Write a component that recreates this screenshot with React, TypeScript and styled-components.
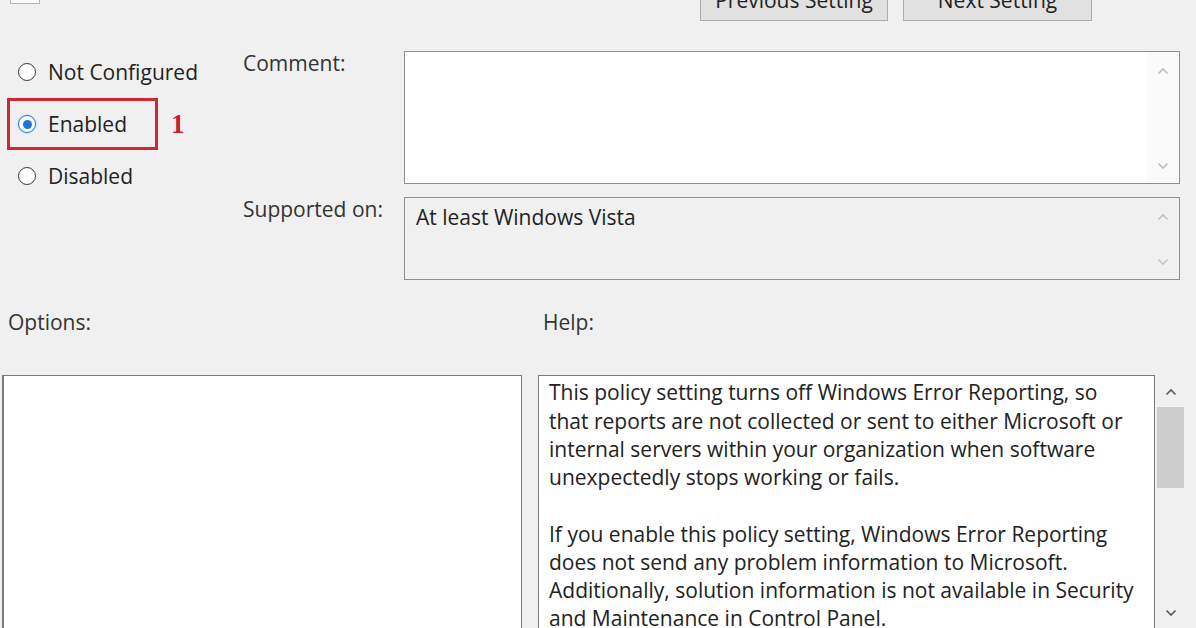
import React from "react";
import styled, { createGlobalStyle } from "styled-components";

const GlobalStyle = createGlobalStyle`
  html, body {
    margin: 0;
    padding: 0;
    background: #f0f0f0;
  }
`;

const Page = styled.div`
  width: 1196px;
  height: 628px;
  overflow: hidden;
  background: #f0f0f0;
  font-family: "Open Sans", "Noto Sans", sans-serif;
  font-size: 21px;
  line-height: 28.25px;
  color: #222;
`;

const TopBar = styled.div`
  display: flex;
  align-items: flex-start;
  height: 41px;
  margin-top: -20px;
  padding: 0 104px 0 10px;
  gap: 15px;
`;

const StateIcon = styled.div`
  width: 28px;
  height: 23px;
  border: 1px solid #b4b4b4;
  border-top: none;
  background: #fafafa;
  margin-right: auto;
`;

const NavButton = styled.button<{ $width: number }>`
  width: ${({ $width }) => $width}px;
  height: 41px;
  background: #e1e1e1;
  border: 1px solid #adadad;
  font: inherit;
  color: #222;
  padding: 0;
`;

const Upper = styled.div`
  display: grid;
  grid-template-columns: 243px 161px 776px;
  grid-template-rows: 133px 83px;
  row-gap: 13px;
  margin-top: 30px;
`;

const RadioGroup = styled.div`
  grid-column: 1;
  grid-row: 1 / 3;
  display: flex;
  flex-direction: column;
  gap: 6px;
  padding-left: 18px;
  margin-top: -2px;
`;

const RadioRow = styled.label<{ $highlight?: boolean }>`
  display: flex;
  align-items: center;
  gap: 12px;
  height: 46px;
  box-sizing: border-box;
  ${({ $highlight }) =>
    $highlight &&
    `
    outline: 3px solid #cf2733;
    margin-left: -8px;
    padding-left: 8px;
    width: 145px;
  `}
`;

const RadioCircle = styled.span<{ $checked?: boolean }>`
  width: 18px;
  height: 18px;
  flex: none;
  box-sizing: border-box;
  border-radius: 50%;
  background: #fff;
  border: 1.5px solid ${({ $checked }) => ($checked ? "#1d75d3" : "#3a3a3a")};
  box-shadow: ${({ $checked }) => ($checked ? "0 0 0 1px #cfe3f7" : "none")};
  display: flex;
  align-items: center;
  justify-content: center;

  &::after {
    content: "";
    width: 9px;
    height: 9px;
    border-radius: 50%;
    background: #1d75d3;
    display: ${({ $checked }) => ($checked ? "block" : "none")};
  }
`;

const Marked = styled.div`
  display: flex;
  align-items: center;
  gap: 16px;
`;

const StepNumber = styled.span`
  font-family: "Liberation Serif", serif;
  font-weight: bold;
  font-size: 27px;
  color: #c8202c;
`;

const FieldLabel = styled.div<{ $row: number }>`
  grid-column: 2;
  grid-row: ${({ $row }) => $row};
  margin-top: -2px;
  color: #333;
`;

const FieldBox = styled.div<{ $row: number; $readOnly?: boolean }>`
  grid-column: 3;
  grid-row: ${({ $row }) => $row};
  display: flex;
  box-sizing: border-box;
  border: 1px solid #8f8f8f;
  background: ${({ $readOnly }) => ($readOnly ? "#f0f0f0" : "#fff")};
`;

const FieldText = styled.div`
  flex: 1;
  padding: 5px 11px;
`;

const ThinScroll = styled.div<{ $tone: string; $track: string }>`
  width: 32px;
  display: flex;
  flex-direction: column;
  justify-content: space-between;
  align-items: center;
  padding: 15px 0 13px;
  color: ${({ $tone }) => $tone};
  background: ${({ $track }) => $track};
`;

const LabelsRow = styled.div`
  display: grid;
  grid-template-columns: 535px 1fr;
  margin-top: 28px;
  padding-left: 8px;
  color: #333;
`;

const Bottom = styled.div`
  display: flex;
  margin-top: 39px;
  padding-left: 2px;
  height: 270px;
`;

const OptionsBox = styled.div`
  width: 520px;
  box-sizing: border-box;
  border: 1px solid #7a7a7a;
  border-left-width: 2px;
  background: #fff;
  margin-right: 16px;
`;

const HelpBox = styled.div`
  width: 617px;
  box-sizing: border-box;
  border: 1px solid #7a7a7a;
  background: #fff;
  padding: 2px 0 0 10px;
`;

const HelpPara = styled.div`
  margin-bottom: 28.25px;
`;

const HelpLine = styled.div`
  white-space: nowrap;
`;

const ScrollBar = styled.div`
  width: 31px;
  display: flex;
  flex-direction: column;
  align-items: center;
  padding-top: 13px;
  background: #f0f0f0;
  color: #5a5a5a;
`;

const Thumb = styled.div`
  width: 27px;
  height: 81px;
  background: #cdcdcd;
  margin: 11px 0 121px;
`;

function Chevron({ up }: { up?: boolean }) {
  return (
    <svg width="12" height="8" viewBox="0 0 12 8">
      <path
        d={up ? "M1.5 6.5 L6 2 L10.5 6.5" : "M1.5 1.5 L6 6 L10.5 1.5"}
        fill="none"
        stroke="currentColor"
        strokeWidth="1.6"
      />
    </svg>
  );
}

const helpText = [
  [
    "This policy setting turns off Windows Error Reporting, so",
    "that reports are not collected or sent to either Microsoft or",
    "internal servers within your organization when software",
    "unexpectedly stops working or fails.",
  ],
  [
    "If you enable this policy setting, Windows Error Reporting",
    "does not send any problem information to Microsoft.",
    "Additionally, solution information is not available in Security",
    "and Maintenance in Control Panel.",
  ],
];

export default function App() {
  return (
    <Page>
      <GlobalStyle />
      <TopBar>
        <StateIcon />
        <NavButton $width={188}>Previous Setting</NavButton>
        <NavButton $width={189}>Next Setting</NavButton>
      </TopBar>

      <Upper>
        <RadioGroup>
          <RadioRow>
            <RadioCircle />
            Not Configured
          </RadioRow>
          <Marked>
            <RadioRow $highlight>
              <RadioCircle $checked />
              Enabled
            </RadioRow>
            <StepNumber>1</StepNumber>
          </Marked>
          <RadioRow>
            <RadioCircle />
            Disabled
          </RadioRow>
        </RadioGroup>

        <FieldLabel $row={1}>Comment:</FieldLabel>
        <FieldBox $row={1}>
          <FieldText />
          <ThinScroll $tone="#bdbdbd" $track="#fafafa">
            <Chevron up />
            <Chevron />
          </ThinScroll>
        </FieldBox>

        <FieldLabel $row={2}>Supported on:</FieldLabel>
        <FieldBox $row={2} $readOnly>
          <FieldText>At least Windows Vista</FieldText>
          <ThinScroll $tone="#c4c4c4" $track="transparent">
            <Chevron up />
            <Chevron />
          </ThinScroll>
        </FieldBox>
      </Upper>

      <LabelsRow>
        <div>Options:</div>
        <div>Help:</div>
      </LabelsRow>

      <Bottom>
        <OptionsBox />
        <HelpBox>
          {helpText.map((para, i) => (
            <HelpPara key={i}>
              {para.map((line) => (
                <HelpLine key={line}>{line}</HelpLine>
              ))}
            </HelpPara>
          ))}
        </HelpBox>
        <ScrollBar>
          <Chevron up />
          <Thumb />
          <Chevron />
        </ScrollBar>
      </Bottom>
    </Page>
  );
}
